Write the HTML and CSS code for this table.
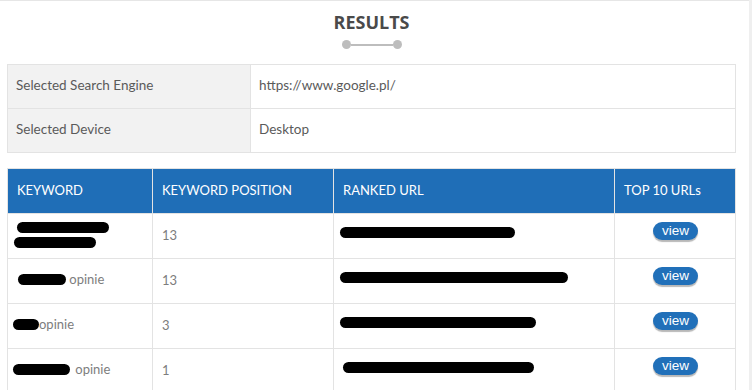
FILE: index.html
```html
<!DOCTYPE html>
<html lang="pl">
<head>
<meta charset="utf-8">
<title>Results</title>
<link rel="stylesheet" href="styles.css">
</head>
<body>
<div class="page">
  <section class="panel">
    <header class="heading">
      <h2 class="heading-title">RESULTS</h2>
      <div class="heading-rule"><span class="dot"></span><span class="line"></span><span class="dot"></span></div>
    </header>

    <table class="info">
      <tr>
        <th class="info-label">Selected Search Engine</th>
        <td class="info-value">https://www.google.pl/</td>
      </tr>
      <tr>
        <th class="info-label">Selected Device</th>
        <td class="info-value">Desktop</td>
      </tr>
    </table>

    <table class="results">
      <thead>
        <tr>
          <th class="col-kw">KEYWORD</th>
          <th class="col-pos">KEYWORD POSITION</th>
          <th class="col-url">RANKED URL</th>
          <th class="col-top">TOP 10 URLs</th>
        </tr>
      </thead>
      <tbody>
        <tr>
          <td class="kw kw-stack"><span class="mask mask-a"></span><span class="mask mask-b"></span></td>
          <td>13</td>
          <td class="url"><span class="mask mask-url1"></span></td>
          <td class="top"><button class="view-btn">view</button></td>
        </tr>
        <tr>
          <td class="kw"><span class="mask mask-c"></span> opinie</td>
          <td>13</td>
          <td class="url"><span class="mask mask-url2"></span></td>
          <td class="top"><button class="view-btn">view</button></td>
        </tr>
        <tr>
          <td class="kw kw-tight"><span class="mask mask-d"></span>opinie</td>
          <td>3</td>
          <td class="url"><span class="mask mask-url3"></span></td>
          <td class="top"><button class="view-btn">view</button></td>
        </tr>
        <tr>
          <td class="kw kw-tight"><span class="mask mask-e"></span> opinie</td>
          <td>1</td>
          <td class="url"><span class="mask mask-url4"></span></td>
          <td class="top"><button class="view-btn">view</button></td>
        </tr>
      </tbody>
    </table>
  </section>
</div>
</body>
</html>
```

FILE: styles.css
```css
html, body {
  margin: 0;
  padding: 0;
}

body {
  background: #efefef;
  font-family: Lato, "Open Sans", Arial, sans-serif;
  font-size: 13px;
  color: #777;
}

.page {
  width: 749px;
  height: 390px;
  overflow: hidden;
  background: #fff;
  border-top: 1px solid #e6e6e6;
  box-sizing: border-box;
}

.panel {
  padding: 0 13px 0 7px;
}

/* section heading with the dot-line-dot rule */
.heading {
  display: flex;
  flex-direction: column;
  align-items: center;
  padding-top: 10px;
  height: 53px;
}

.heading-title {
  margin: 0;
  font-family: "Open Sans", Arial, sans-serif;
  font-weight: 700;
  font-size: 18px;
  line-height: 22px;
  color: #4a4a4a;
}

.heading-rule {
  display: flex;
  align-items: center;
  margin-top: 7px;
  margin-left: 1px;
}

.heading-rule .dot {
  width: 9px;
  height: 9px;
  border-radius: 50%;
  background: #bdbdbd;
}

.heading-rule .line {
  width: 42px;
  height: 2px;
  background: #bdbdbd;
}

/* key/value summary table */
table {
  border-collapse: collapse;
  width: 729px;
  table-layout: fixed;
}

.info {
  margin-bottom: 15px;
}

.info th,
.info td {
  border: 1px solid #e3e3e3;
  height: 40px;
  padding: 0 8px 3px;
  text-align: left;
  font-weight: 400;
  font-size: 13.5px;
  color: #5a5a5a;
}

.info-label {
  width: 226px;
  background: #f2f2f2;
}

.info-value {
  background: #fff;
}

/* results grid */
.results th {
  background: #1f6eb7;
  color: #fff;
  font-weight: 400;
  text-align: left;
  height: 42px;
  padding: 0 9px 2px;
  border: 1px solid #e3e3e3;
  border-bottom: 0;
}

.results th + th {
  border-left: 1px solid #d6e3f0;
}

.col-kw { width: 126px; }
.col-pos { width: 162px; }
.col-url { width: 262px; }

.results td {
  height: 41px;
  padding: 0 9px 3px;
  border: 1px solid #e3e3e3;
  color: #7d7d7d;
}

.results td.kw-tight {
  padding-left: 5px;
}

.results td.url {
  padding-left: 6px;
}

.results td.top {
  height: 33px;
  text-align: center;
  padding: 0 0 11px 0;
}

/* redaction marks over private keywords and URLs */
.mask {
  display: inline-block;
  height: 11px;
  border-radius: 6px;
  background: #000;
  vertical-align: middle;
  margin-bottom: 3px;
}

.kw-stack .mask {
  display: block;
  margin-bottom: 0;
}

.kw-stack .mask-a { width: 92px; margin-bottom: 4px; }
.kw-stack .mask-b { width: 82px; margin-left: -3px; }
.mask-c { width: 48px; margin-left: 1px; }
.mask-d { width: 26px; }
.mask-e { width: 57px; margin-right: 2px; }

.url .mask { margin-bottom: 6px; }
.mask-url1 { width: 175px; }
.mask-url2 { width: 228px; }
.mask-url3 { width: 196px; }
.mask-url4 { width: 191px; margin-left: 3px; }

.view-btn {
  display: inline-block;
  width: 45px;
  height: 18px;
  padding: 0;
  border: 0;
  border-radius: 9px;
  background: #2170b9;
  color: #fff;
  font-family: Arial, "Liberation Sans", sans-serif;
  font-size: 13.5px;
  line-height: 17px;
  box-shadow: 0 2px 1px rgba(0, 0, 0, 0.28);
  margin-left: 1px;
}
```
